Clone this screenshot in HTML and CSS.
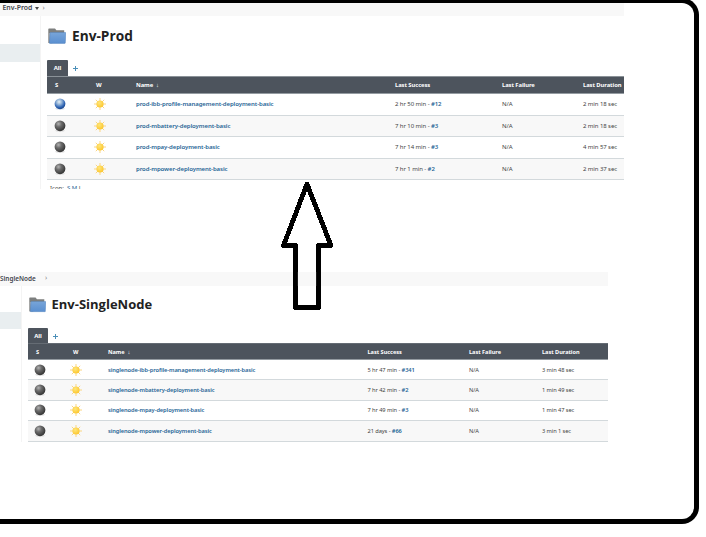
FILE: index.html
```html
<!DOCTYPE html>
<html lang="en">
<head>
<meta charset="utf-8">
<title>Jenkins environments</title>
<link rel="stylesheet" href="styles.css">
</head>
<body>
<svg class="defs" width="0" height="0" aria-hidden="true">
  <defs>
    <radialGradient id="gray" cx=".36" cy=".32" r=".7"><stop offset="0" stop-color="#b2b2b2"/><stop offset=".4" stop-color="#6c6c6c"/><stop offset="1" stop-color="#343434"/></radialGradient>
    <radialGradient id="blue" cx=".42" cy=".32" r=".68"><stop offset="0" stop-color="#e6eff4"/><stop offset=".35" stop-color="#95b5d8"/><stop offset=".75" stop-color="#2f64b3"/><stop offset="1" stop-color="#194489"/></radialGradient>
    <radialGradient id="sunfill" cx=".4" cy=".35" r=".7"><stop offset="0" stop-color="#ffe679"/><stop offset="1" stop-color="#fcc52a"/></radialGradient>
    <linearGradient id="folderfill" x1="0" y1="0" x2="0" y2="1"><stop offset="0" stop-color="#78a5d9"/><stop offset="1" stop-color="#5a8fd0"/></linearGradient>
    <symbol id="ball-gray" viewBox="0 0 12 12"><ellipse cx="6" cy="10.6" rx="4.8" ry="1.2" fill="#ddd"/><circle cx="6" cy="5.8" r="5.4" fill="url(#gray)"/></symbol>
    <symbol id="ball-blue" viewBox="0 0 12 12"><ellipse cx="6" cy="10.6" rx="4.8" ry="1.2" fill="#d7dfea"/><circle cx="6" cy="5.8" r="5.4" fill="url(#blue)"/></symbol>
    <symbol id="sun" viewBox="0 0 12 12"><path d="M6 0v12M0 6h12M1.8 1.8l8.4 8.4M10.2 1.8l-8.4 8.4" stroke="#fbd681" stroke-width="1"/><circle cx="6" cy="6" r="3.6" fill="url(#sunfill)"/></symbol>
    <symbol id="folder" viewBox="0 0 18 16"><path d="M.3 15V1.2Q.3.4 1 .4h6l1.4 1.8h7.8v6L4 15.2z" fill="#7d7f7e"/><path d="M.4 5h1.8L1.2 15H.4z" fill="#aaa"/><path d="M2.5 4.5h15q.4 0 .4.5l-.6 9.8q0 .6-.6.6H1.9Q1.3 15.4 1.4 14.8l.6-9.8q0-.5.5-.5z" fill="url(#folderfill)" stroke="#5684bd" stroke-width=".5"/></symbol>
  </defs>
</svg>
<main class="frame">
  <section class="panel prod">
    <nav class="crumbs"><b class="crumb">Env-Prod</b><i class="caret"></i><span class="chev">›</span></nav>
    <div class="body">
      <aside class="side"><div class="active"></div></aside>
      <div class="content">
        <h1 class="title"><svg class="folder"><use href="#folder"/></svg><span>Env-Prod</span></h1>
        <div class="tabs"><span class="tab">All</span><span class="plus"></span></div>
        <div class="table">
          <div class="row head"><span>S</span><span class="w">W</span><span>Name&nbsp; ↓</span><span>Last Success</span><span>Last Failure</span><span>Last Duration</span></div>
          <div class="row"><svg class="ball"><use href="#ball-blue"/></svg><svg class="sun"><use href="#sun"/></svg><a class="job">prod-ibb-profile-management-deployment-basic</a><span>2 hr 50 min - <b>#12</b></span><span>N/A</span><span>2 min 18 sec</span></div>
          <div class="row"><svg class="ball"><use href="#ball-gray"/></svg><svg class="sun"><use href="#sun"/></svg><a class="job">prod-mbattery-deployment-basic</a><span>7 hr 10 min - <b>#3</b></span><span>N/A</span><span>2 min 18 sec</span></div>
          <div class="row"><svg class="ball"><use href="#ball-gray"/></svg><svg class="sun"><use href="#sun"/></svg><a class="job">prod-mpay-deployment-basic</a><span>7 hr 14 min - <b>#3</b></span><span>N/A</span><span>4 min 57 sec</span></div>
          <div class="row"><svg class="ball"><use href="#ball-gray"/></svg><svg class="sun"><use href="#sun"/></svg><a class="job">prod-mpower-deployment-basic</a><span>7 hr 1 min - <b>#2</b></span><span>N/A</span><span>2 min 37 sec</span></div>
        </div>
        <div class="sizes">Icon: &nbsp;<a>S</a> <a>M</a> L</div>
      </div>
    </div>
  </section>
  <section class="panel single">
    <nav class="crumbs"><b class="crumb">SingleNode</b><span class="chev">›</span></nav>
    <div class="body">
      <aside class="side"><div class="active"></div></aside>
      <div class="content">
        <h1 class="title"><svg class="folder"><use href="#folder"/></svg><span>Env-SingleNode</span></h1>
        <div class="tabs"><span class="tab">All</span><span class="plus"></span></div>
        <div class="table">
          <div class="row head"><span>S</span><span class="w">W</span><span>Name&nbsp; ↓</span><span>Last Success</span><span>Last Failure</span><span>Last Duration</span></div>
          <div class="row"><svg class="ball"><use href="#ball-gray"/></svg><svg class="sun"><use href="#sun"/></svg><a class="job">singlenode-ibb-profile-management-deployment-basic</a><span>5 hr 47 min - <b>#341</b></span><span>N/A</span><span>3 min 48 sec</span></div>
          <div class="row"><svg class="ball"><use href="#ball-gray"/></svg><svg class="sun"><use href="#sun"/></svg><a class="job">singlenode-mbattery-deployment-basic</a><span>7 hr 42 min - <b>#2</b></span><span>N/A</span><span>1 min 49 sec</span></div>
          <div class="row"><svg class="ball"><use href="#ball-gray"/></svg><svg class="sun"><use href="#sun"/></svg><a class="job">singlenode-mpay-deployment-basic</a><span>7 hr 49 min - <b>#3</b></span><span>N/A</span><span>1 min 47 sec</span></div>
          <div class="row"><svg class="ball"><use href="#ball-gray"/></svg><svg class="sun"><use href="#sun"/></svg><a class="job">singlenode-mpower-deployment-basic</a><span>21 days - <b>#66</b></span><span>N/A</span><span>3 min 1 sec</span></div>
        </div>
      </div>
    </div>
  </section>
  <svg class="arrow" viewBox="0 0 52 130"><path d="M26 4 L50 65.5 H37.5 V127.5 H14.5 V65.5 H2.5 Z" fill="#fff" stroke="#000" stroke-width="4.8" stroke-linejoin="round" shape-rendering="crispEdges"/><path d="M16.9 92h18.2v14H16.9z" fill="#f8f8f8"/></svg>
</main>
</body>
</html>
```
FILE: styles.css
```css
* { box-sizing: border-box; }
body { margin: 0; width: 706px; height: 537px; overflow: hidden; background: #fff; font-family: "Noto Sans", "Open Sans", sans-serif; color: #444; }
.defs { display: block; height: 0; }
.frame { position: relative; width: 699px; height: 526px; margin-top: -2px; border: 5px solid #000; border-left: 0; border-radius: 0 17px 17px 0; }
.panel { overflow: hidden; display: flex; flex-direction: column; }
.prod { width: 624px; height: 186px; }
.single { width: 608px; height: 170px; margin-top: 83px; }
.crumbs { flex: none; display: flex; align-items: center; background: #f8f8f8; white-space: nowrap; color: #42454c; }
.prod .crumbs { height: 13px; padding: 0 0 3px 2.5px; font-size: 6.9px; }
.single .crumbs { height: 14px; padding-bottom: 1px; font-size: 6.4px; }
.crumb { flex: none; font-weight: 600; line-height: 8px; }
.prod .crumb { width: 32px; }
.single .crumb { width: 45px; }
.caret { border: 2px solid transparent; border-top: 3px solid #444; border-bottom: 0; margin-right: 4px; }
.chev { font-size: 7px; line-height: 8px; color: #888; margin-top: -1px; }
.body { flex: 1; display: flex; min-height: 0; }
.side { flex: none; border-right: 1px solid #f4f4f4; }
.prod .side { width: 41px; padding-top: 28px; }
.single .side { width: 22px; padding-top: 26px; }
.active { background: #e9eef0; height: 17.5px; }
.single .active { height: 16.5px; }
.content { flex: 1; min-width: 0; padding-left: 6px; }
.title { margin: 0; display: flex; align-items: flex-start; font-family: "Open Sans", "Noto Sans", sans-serif; font-weight: 700; color: #222; white-space: nowrap; }
.folder { flex: none; }
.prod .title { height: 44px; padding: 12px 0 0 1px; font-size: 13.7px; line-height: 15px; gap: 6px; }
.prod .folder { width: 18px; height: 16px; }
.single .title { height: 42px; padding: 11px 0 0 1px; font-size: 13px; line-height: 15px; gap: 5.5px; }
.single .folder { width: 17px; height: 15.5px; }
.tabs { display: flex; }
.tab { background: #4d545d; color: #fff; font-weight: 700; text-align: center; border-radius: 1px 1px 0 0; }
.prod .tab { width: 21px; height: 16px; font-size: 6px; line-height: 17px; }
.single .tab { width: 20px; height: 15px; font-size: 6px; line-height: 16px; }
.plus { width: 5px; height: 5px; margin: 6px 0 0 5px; background: linear-gradient(#4b8fb8, #4b8fb8) 2px 0 / 1px 5px no-repeat, linear-gradient(#4b8fb8, #4b8fb8) 0 2px / 5px 1px no-repeat; }
.row { display: grid; align-items: center; white-space: nowrap; border-bottom: 1px solid #d3d9dc; }
.prod .row { height: 21.5px; grid-template-columns: 41px 48px 259px 107px 81px 42px; font-size: 6px; letter-spacing: -.08px; }
.single .row { height: 20.4px; grid-template-columns: 37px 43px 259.5px 101.5px 73px 67px; font-size: 5.7px; letter-spacing: -.08px; }
.row:nth-child(odd):not(.head) { background: #f8f8f8; }
.row.head { background: #4d545d; color: #fff; font-weight: 700; border-top: 1px solid #8b9298; border-bottom-color: #949ba1; }
.prod .row.head { height: 18px; font-size: 5.85px; }
.single .row.head { height: 17px; font-size: 5.6px; letter-spacing: -.02px; border-top-color: #656c74; }
.head span:first-child { padding-left: 8px; }
.head .w { padding-left: 8px; }
.ball, .sun { display: block; width: 12px; height: 12px; }
.ball { margin-left: 6.5px; }
.sun { margin-left: 6px; }
.single .ball { margin-left: 5.5px; }
.single .sun { margin-left: 5px; }
.job, .row b { color: #1f6596; font-weight: 600; }
.sizes a { color: #1f6596; }
.sizes { font-size: 6px; line-height: 8px; padding: 4px 0 0 3px; white-space: nowrap; }
.arrow { position: absolute; left: 281px; top: 177px; width: 52px; height: 130px; }
```
